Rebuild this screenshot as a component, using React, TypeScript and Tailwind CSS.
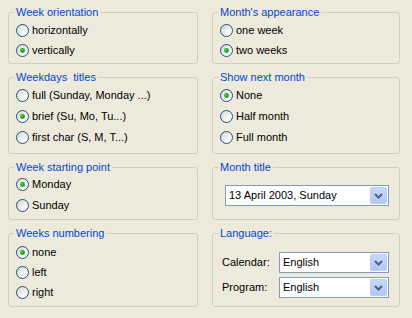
import type { JSX } from 'react'

type Option = { label: string; checked?: boolean }

function Radio({ checked }: { checked?: boolean }): JSX.Element {
  return (
    <svg width="13" height="13" viewBox="0 0 13 13" className="shrink-0">
      <defs>
        <linearGradient id="radioFill" x1="0" y1="0" x2="1" y2="1">
          <stop offset="0" stopColor="#D6D6CE" />
          <stop offset="0.6" stopColor="#F4F4F0" />
          <stop offset="1" stopColor="#FFFFFF" />
        </linearGradient>
      </defs>
      <circle cx="6.5" cy="6.5" r="6" fill="url(#radioFill)" stroke="#1C5180" strokeWidth="1" />
      {checked && (
        <>
          <circle cx="6.5" cy="6.5" r="2.4" fill="#1FA51F" />
          <circle cx="6" cy="6" r="0.9" fill="#5FD35F" />
        </>
      )}
    </svg>
  )
}

function Group({
  title,
  children,
}: {
  title: string
  children: React.ReactNode
}): JSX.Element {
  return (
    <fieldset className="h-full rounded-[3px] border border-[#D0D0BF] pl-[5px]">
      <legend className="whitespace-pre px-[2px] leading-[13px] text-[#0046D5]">{title}</legend>
      {children}
    </fieldset>
  )
}

function RadioList({
  options,
  rowClass,
  topClass,
}: {
  options: Option[]
  rowClass: string
  topClass: string
}): JSX.Element {
  return (
    <div className={`ml-[2px] flex flex-col ${topClass}`}>
      {options.map((o) => (
        <label key={o.label} className={`flex items-center gap-[3px] ${rowClass}`}>
          <Radio checked={o.checked} />
          <span className="leading-[13px]">{o.label}</span>
        </label>
      ))}
    </div>
  )
}

function Combo({ value, width }: { value: string; width: string }): JSX.Element {
  return (
    <div
      className={`flex h-[21px] items-center border border-[#7F9DB9] bg-white pl-[3px] pr-[1px] ${width}`}
    >
      <span className="flex-1 leading-[13px]">{value}</span>
      <svg width="17" height="17" viewBox="0 0 17 17" className="shrink-0">
        <defs>
          <linearGradient id="comboBtn" x1="0" y1="0" x2="0" y2="1">
            <stop offset="0" stopColor="#C8D8FD" />
            <stop offset="1" stopColor="#B1C6F7" />
          </linearGradient>
        </defs>
        <rect x="0.5" y="0.5" width="16" height="16" rx="1.5" fill="url(#comboBtn)" stroke="#BCCDF5" />
        <path d="M5 7 L8.5 10.5 L12 7" fill="none" stroke="#4D6185" strokeWidth="2" />
      </svg>
    </div>
  )
}

export default function App(): JSX.Element {
  return (
    <div className="h-[318px] w-[412px] overflow-hidden bg-[#EDEADB] pl-[8px] pt-[6px] font-['Liberation_Sans',Arial,sans-serif] text-[11px] text-black">
      <div className="grid grid-cols-[190px_188px] grid-rows-[58px_83px_59px_80px] gap-x-[14px] gap-y-[7px]">
        <Group title="Week orientation">
          <RadioList
            topClass="pt-[1px]"
            rowClass="h-[20px]"
            options={[{ label: 'horizontally' }, { label: 'vertically', checked: true }]}
          />
        </Group>
        <Group title="Month's appearance">
          <RadioList
            topClass="pt-[1px]"
            rowClass="h-[20px]"
            options={[{ label: 'one week' }, { label: 'two weeks', checked: true }]}
          />
        </Group>

        <Group title="Weekdays  titles">
          <RadioList
            topClass="pt-[1px]"
            rowClass="h-[21px]"
            options={[
              { label: 'full (Sunday, Monday ...)' },
              { label: 'brief (Su, Mo, Tu...)', checked: true },
              { label: 'first char (S, M, T...)' },
            ]}
          />
        </Group>
        <Group title="Show next month">
          <RadioList
            topClass="pt-[1px]"
            rowClass="h-[21px]"
            options={[
              { label: 'None', checked: true },
              { label: 'Half month' },
              { label: 'Full month' },
            ]}
          />
        </Group>

        <Group title="Week starting point">
          <RadioList
            topClass="pt-0"
            rowClass="h-[21px]"
            options={[{ label: 'Monday', checked: true }, { label: 'Sunday' }]}
          />
        </Group>
        <Group title="Month title">
          <div className="ml-[7px] mt-[11px]">
            <Combo value="13 April 2003, Sunday" width="w-[164px]" />
          </div>
        </Group>

        <Group title="Weeks numbering">
          <RadioList
            topClass="pt-[2px]"
            rowClass="h-[20px]"
            options={[{ label: 'none', checked: true }, { label: 'left' }, { label: 'right' }]}
          />
        </Group>
        <Group title="Language:">
          <div className="ml-[4px] mt-[12px] flex flex-col gap-[4px]">
            <div className="flex items-center">
              <span className="w-[57px] leading-[13px]">Calendar:</span>
              <Combo value="English" width="w-[110px]" />
            </div>
            <div className="flex items-center">
              <span className="w-[57px] leading-[13px]">Program:</span>
              <Combo value="English" width="w-[110px]" />
            </div>
          </div>
        </Group>
      </div>
    </div>
  )
}
